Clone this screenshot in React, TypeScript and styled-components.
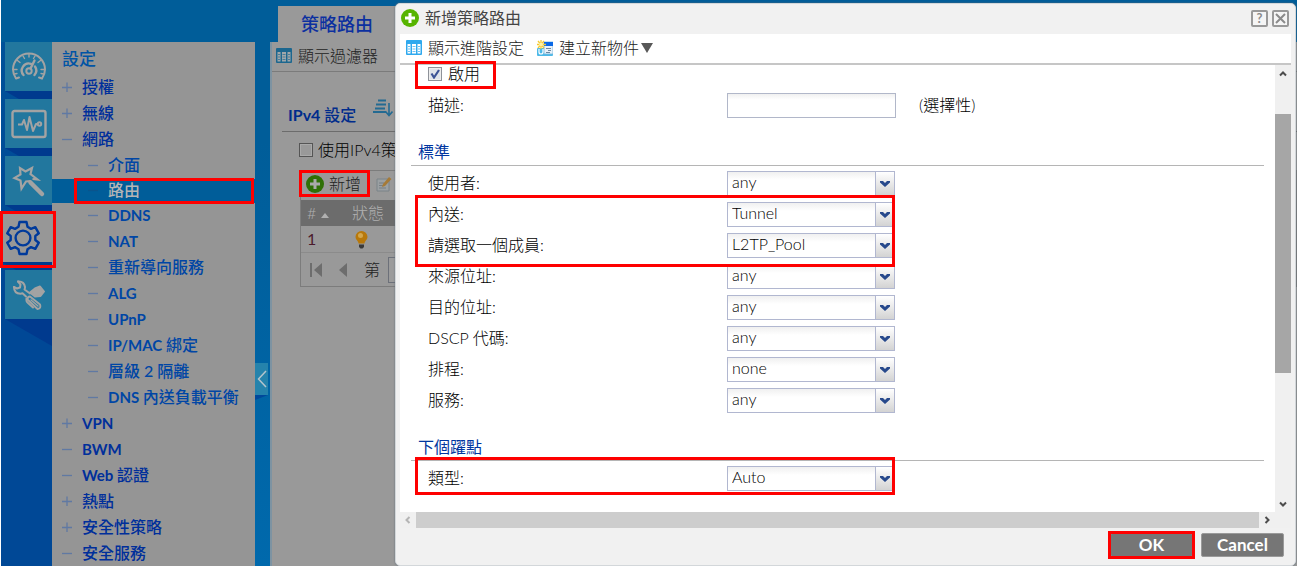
import React from "react";
import styled, { createGlobalStyle, css } from "styled-components";

const GlobalStyle = createGlobalStyle`
  * { box-sizing: border-box; }
  body {
    margin: 0;
    background: #fff;
    font-family: Lato, "Noto Sans CJK TC", sans-serif;
    font-size: 16px;
    font-weight: 300;
    line-height: 20px;
    color: #222;
  }
  button, input, select { font: inherit; color: inherit; margin: 0; padding: 0; }
  ul { list-style: none; margin: 0; padding: 0; }
  h1, h2 { margin: 0; font-size: inherit; }
`;

/* ---------- page shell ---------- */

const Page = styled.div`
  position: relative;
  display: flex;
  min-height: 100vh;
  margin-left: 1px;
  background: linear-gradient(#005d99 0%, #005d99 25%, #0069ac 100%);
`;

const Mark = styled.span<{ $inset: string }>`
  position: absolute;
  inset: ${(p) => p.$inset};
  border: 3px solid #fe0000;
  pointer-events: none;
  z-index: 3;
`;

const Rail = styled.nav`
  display: flex;
  flex-direction: column;
  gap: 8px;
  width: 51px;
  margin-top: 42px;
  padding-left: 4px;
  background: linear-gradient(#005199, #004896 45%);
`;

const RailButton = styled.button<{ $active?: boolean }>`
  position: relative;
  display: flex;
  align-items: center;
  justify-content: center;
  height: 49px;
  border: 0;
  background: ${(p) => (p.$active ? "#979797" : "#22779e")};
  color: ${(p) => (p.$active ? "#003a9b" : "#a3a3a3")};
  ${(p) => p.$active && css`margin-left: -4px; padding-right: 8px;`}
  &::after {
    content: "";
    position: absolute;
    top: 100%;
    left: 0;
    right: 0;
    height: 27px;
    background: #003a8e;
    clip-path: polygon(0 0, 100% 0, 100% 100%);
  }
  svg { display: block; }
`;

const Menu = styled.nav`
  width: 203px;
  margin-top: 42px;
  background: #959595;
`;

const MenuTitle = styled.h1`
  height: 33px;
  padding-left: 10px;
  font-size: 17px;
  line-height: 33px;
  font-weight: 500;
  color: #0054a5;
`;

const MenuItem = styled.li<{ $level: number; $selected?: boolean }>`
  position: relative;
  display: flex;
  align-items: center;
  gap: 10px;
  height: ${(p) => (p.$selected ? 24 : 26)}px;
  padding-bottom: 2px;
  padding-left: ${(p) => (p.$level === 1 ? 10 : 36)}px;
  background: ${(p) => (p.$selected ? "#005d99" : "transparent")};
  svg { flex: none; color: ${(p) => (p.$selected ? "#0a548c" : "#6079a3")}; }
  a { color: ${(p) => (p.$selected ? "#b5b5b5" : p.$level === 1 ? "#002f9b" : "#0046a5")}; }
`;

const MenuText = styled.a`
  font-size: 15px;
  font-weight: 700;
  text-decoration: none;
  white-space: nowrap;
`;

const Cjk = styled.span`
  font-size: 16px;
  font-weight: 500;
`;

const Gutter = styled.div`
  display: flex;
  align-items: flex-start;
  width: 15px;
  padding-top: 363px;
`;

const Collapse = styled.button`
  position: relative;
  display: flex;
  align-items: center;
  justify-content: center;
  width: 13px;
  height: 32px;
  border: 0;
  background: #2583ac;
  color: #b4c4cc;
  &::after {
    content: "";
    position: absolute;
    top: 100%;
    left: 0;
    right: 0;
    height: 5px;
    background: #00489b;
    clip-path: polygon(0 0, 100% 0, 0 100%);
  }
`;

/* ---------- page behind the dialog ---------- */

const Content = styled.main`
  flex: 1;
  min-width: 0;
  display: flex;
  flex-direction: column;
  padding-top: 6px;
`;

const Tab = styled.div`
  align-self: flex-start;
  width: 150px;
  height: 36px;
  margin-left: 8px;
  padding-left: 23px;
  font-size: 18px;
  font-weight: 500;
  line-height: 36px;
  background: #999;
  color: #0c30a0;
`;

const Panel = styled.section`
  flex: 1;
  background: #999;
  border-left: 2px solid #7d93a2;
`;

const PanelBar = styled.div`
  display: flex;
  align-items: center;
  gap: 6px;
  height: 30px;
  padding: 0 0 2px 4px;
  border-bottom: 1px solid #7b7b7b;
`;

const PanelHead = styled.div`
  display: flex;
  align-items: flex-end;
  gap: 17px;
  height: 60px;
  margin-left: 10px;
  padding: 0 0 6px 6px;
  border-bottom: 1px solid #6c6c6c;
  h2 { font-weight: 700; color: #002c8c; white-space: nowrap; }
  svg { margin-bottom: 8px; }
`;

const PanelCheck = styled.label`
  display: flex;
  align-items: center;
  gap: 5px;
  height: 38px;
  padding: 0 0 2px 27px;
  color: #000;
`;

const CheckBox = styled.input`
  appearance: none;
  width: 14px;
  height: 14px;
  border: 1px solid #8e9299;
  background: linear-gradient(135deg, #d0d4da, #fdfdfd);
  box-shadow: inset 0 0 0 1px #eee;
  &:checked {
    background: url("data:image/svg+xml,%3Csvg xmlns='http://www.w3.org/2000/svg' viewBox='0 0 12 12'%3E%3Cpath d='M2.5 5.5L5 9.5L10 2' fill='none' stroke='%233c5396' stroke-width='2.2'/%3E%3C/svg%3E") center / 12px 12px no-repeat, #dfe3ea;
  }
`;

const DimCheckBox = styled(CheckBox)`
  border-color: #555;
  background: #999;
  box-shadow: inset 0 0 0 1px #a9a9a9;
`;

const Grid = styled.div`
  margin-left: 28px;
  border: 1px solid #7c7c7c;
`;

const GridTools = styled.div`
  display: flex;
  align-items: center;
  gap: 15px;
  height: 29px;
  padding: 0 0 3px 5px;
`;

const GridTool = styled.button`
  position: relative;
  display: flex;
  align-items: center;
  gap: 5px;
  border: 0;
  background: none;
`;

const Table = styled.table`
  width: 100%;
  border-collapse: collapse;
  text-align: left;
  th, td { padding: 0 0 0 6px; }
  th { height: 26px; background: #6c6c6c; color: #b0b0b0; font-weight: 300; }
  td { height: 26px; color: #4b1a2c; font-weight: 400; }
  th:first-child { width: 45px; }
  td:last-child { padding-left: 9px; }
  svg { vertical-align: middle; }
`;

const Pager = styled.div`
  display: flex;
  align-items: center;
  gap: 17px;
  height: 34px;
  padding-left: 9px;
  border-top: 1px solid #8b8b8b;
  input { width: 36px; height: 26px; margin-left: -9px; border: 1px solid #6c7079; background: #9b9b9b; }
`;

/* ---------- dialog ---------- */

const Dialog = styled.div`
  position: absolute;
  top: 3px;
  right: 1px;
  bottom: 1px;
  left: 394px;
  z-index: 2;
  display: flex;
  flex-direction: column;
  padding: 0 4px;
  border: 1px solid #d3d7da;
  border-radius: 5px;
  background: #f1f1f1;
  box-shadow: 0 0 2px #5d6a75;
`;

const DialogHead = styled.header`
  display: flex;
  align-items: center;
  gap: 4px;
  height: 30px;
  padding: 0 2px 2px 1px;
  h2 { flex: 1; padding-left: 2px; font-weight: 400; color: #444; }
`;

const HeadButton = styled.button`
  display: flex;
  align-items: center;
  justify-content: center;
  width: 17px;
  height: 17px;
  border: 2px solid #999;
  border-radius: 2px;
  background: #f5f5f5;
  color: #8b8b8b;
  font-size: 13px;
  font-weight: 700;
  line-height: 12px;
`;

const Toolbar = styled.div`
  display: flex;
  align-items: center;
  gap: 13px;
  height: 31px;
  padding: 0 6px 2px;
  background: #fff;
  border-bottom: 2px solid #c6c6c6;
`;

const ToolButton = styled.button`
  display: flex;
  align-items: center;
  gap: 6px;
  border: 0;
  background: none;
  svg { display: block; }
`;

const MenuLabel = styled.span`
  display: flex;
  align-items: center;
  gap: 2px;
`;

const Scroller = styled.div`
  flex: 1;
  min-height: 0;
  display: grid;
  grid-template-columns: 1fr 16px;
  grid-template-rows: 1fr 16px;
`;

const Form = styled.form`
  min-height: 0;
  padding: 0 11px;
  background: #fff;
  color: #000;
`;

const EnableRow = styled.label`
  position: relative;
  display: flex;
  align-items: center;
  gap: 6px;
  width: 80px;
  height: 20px;
  margin: 0 0 5px 4px;
  padding: 0 0 2px 13px;
`;

const SectionTitle = styled.h2`
  height: 45px;
  margin-bottom: 2px;
  padding: 19px 0 0 7px;
  border-bottom: 1px solid #b5b5b5;
  font-weight: 400;
  line-height: 24px;
  color: #0036a0;
`;

const Group = styled.div`
  position: relative;
  width: 484px;
`;

const Row = styled.div`
  display: flex;
  align-items: center;
  height: 31px;
  padding-left: 17px;
  label { width: 299px; padding-bottom: 2px; }
`;

const TextInput = styled.input`
  width: 169px;
  height: 25px;
  border: 1px solid #b1b7c9;
  background: linear-gradient(#f0f0f0, #fff 6px);
`;

const Hint = styled.span`
  margin-left: 23px;
  padding-bottom: 2px;
`;

const SelectBox = styled.span`
  position: relative;
  display: block;
  width: 168px;
  height: 25px;
  select {
    appearance: none;
    width: 100%;
    height: 100%;
    padding: 0 22px 3px 4px;
    border: 1px solid #b1b7d0;
    border-radius: 0;
    background: linear-gradient(#f0f0f0, #fff 8px);
    line-height: 20px;
  }
`;

const SelectArrow = styled.span`
  position: absolute;
  top: 0;
  right: 0;
  bottom: 0;
  display: flex;
  align-items: center;
  justify-content: center;
  width: 20px;
  border: 1px solid #b1b7d0;
  background: linear-gradient(#fff, #d3d3d3);
  pointer-events: none;
`;

const VBar = styled.div`
  display: flex;
  flex-direction: column;
  align-items: center;
  justify-content: space-between;
  padding: 5px 0 4px;
  background: #f0f0f0;
`;

const VTrack = styled.div`
  flex: 1;
  width: 100%;
  padding: 36px 0 127px;
  div { height: 100%; background: #a6a6a6; }
`;

const HBar = styled.div`
  display: flex;
  align-items: center;
  gap: 4px;
  padding: 0 4px;
  background: #f0f0f0;
  div { flex: 1; height: 16px; background: #cdcdcd; }
`;

const Corner = styled.div`
  background: #f0f0f0;
`;

const DialogFoot = styled.footer`
  display: flex;
  justify-content: flex-end;
  gap: 8px;
  height: 37px;
  padding: 5px 7px 0 0;
`;

const FootButton = styled.button`
  position: relative;
  width: 83px;
  height: 24px;
  border: 1px solid #9a9a9a;
  border-radius: 2px;
  background: #767676;
  color: #fff;
  font-size: 17px;
  font-weight: 700;
  line-height: 20px;
`;

/* ---------- drawings ---------- */

const stroke = { fill: "none", stroke: "currentColor" } as const;

const GaugeIcon = () => (
  <svg width="36" height="30" viewBox="0 0 36 30" {...stroke} strokeWidth="2" strokeLinecap="round">
    <path d="M5 26.500Q2 22 2 17.500A16 16 0 0 1 34 17.500Q34 22 31 26.500L28 25.500M5 26.500L8 25.500" />
    <path d="M2.500 17.500H6M33.500 17.500H30M6.500 8.500L9 10.500M29.500 8.500L27 10.500M12 4L13.500 6.500M18 2V5M24 4L22.500 6.500M3.500 22L6 21.500M32.500 22L30 21.500" strokeWidth="1.400" />
    <path d="M12.500 23A7 7 0 0 1 20 11.800M24 14.500A7 7 0 0 1 23.500 23" strokeWidth="2.400" />
    <circle cx="18" cy="19" r="2.700" />
    <path d="M19.500 16.500L23.500 8.500" strokeWidth="2.400" />
  </svg>
);

const MonitorIcon = () => (
  <svg width="36" height="30" viewBox="0 0 36 30" {...stroke} strokeWidth="2" strokeLinejoin="round">
    <rect x="1.500" y="2" width="33" height="26" rx="2" strokeWidth="2.400" />
    <path d="M7 15.500H11L13 11L16 21L18.500 8L22 22L25 15H27" />
    <circle cx="28.500" cy="15" r="1.700" />
  </svg>
);

const WandIcon = () => (
  <svg width="34" height="34" viewBox="0 0 34 34" {...stroke} strokeWidth="2.200" strokeLinejoin="miter">
    <path d="M18.500 17L14 17.500L9.500 24.500L8.500 16.500L2.500 14L8.500 10.500L8 4L13.500 7.500L20 4L18.500 10L25.500 15.500L20.500 15" />
    <path d="M18.500 18.500L30 30" strokeWidth="4.500" strokeLinecap="round" />
  </svg>
);

const GearIcon = () => (
  <svg width="36" height="36" viewBox="0 0 36 36" {...stroke} strokeWidth="2.400" strokeLinejoin="round">
    <circle cx="18" cy="18" r="7.400" />
    <path d="M14.500 2H21.500L22.500 6.800L26 8.900L30.300 7.200L33.800 13.300L30.300 16V20L33.800 22.700L30.300 28.800L26 27.100L22.500 29.200L21.500 34H14.500L13.500 29.200L10 27.100L5.700 28.800L2.200 22.700L5.700 20V16L2.200 13.300L5.700 7.200L10 8.900L13.500 6.800Z" />
  </svg>
);

const ToolsIcon = () => (
  <svg width="34" height="32" viewBox="0 0 34 32" {...stroke} strokeWidth="2" strokeLinejoin="round" strokeLinecap="round">
    <path d="M6 2.500Q12 2 13 8Q13 9.500 12.500 10.500L18 14.500M2 8Q2 14.500 8.500 14.800L10.500 14.300L14 17.500" />
    <path d="M6 2.500L8.500 5.500L8 8.500L5 9.500L2 8" />
    <path d="M18 13.500L23 9.500L28 7.500L32 12.500L28.500 17L23 17.500Z" fill="currentColor" />
    <path d="M14.500 19.500Q14 22.500 16 24L21 28.500" />
    <path d="M18 17.500L28 25.500Q29.500 29.500 25.500 30L15.500 20.500Q15.500 17.500 18 17.500Z" />
    <path d="M19 21L26 27" strokeWidth="1.400" />
  </svg>
);

const Toggle = ({ open }: { open: boolean }) => (
  <svg width="10" height="10" viewBox="0 0 10 10" {...stroke} strokeWidth="1.300">
    <path d={open ? "M0 5.500H10" : "M0 5.500H10M5 0.500V10"} />
  </svg>
);

const AddIcon = () => (
  <svg width="18" height="18" viewBox="0 0 18 18">
    <circle cx="9" cy="9" r="9" fill="#57b400" />
    <path d="M9 4V14M4 9H14" stroke="#fff" strokeWidth="3" />
  </svg>
);

const DimAddIcon = () => (
  <svg width="18" height="18" viewBox="0 0 18 18">
    <circle cx="9" cy="9" r="9" fill="#2f7006" />
    <path d="M9 4V14M4 9H14" stroke="#aaa" strokeWidth="3" />
  </svg>
);

const ColumnsIcon = ({ dim }: { dim?: boolean }) => (
  <svg width="16" height="15" viewBox="0 0 16 15">
    <rect width="16" height="15" rx="1" fill={dim ? "#1c678f" : "#2fa9ee"} />
    <path d="M1.500 4H4.500V13.500H1.500ZM6 4H10V13.500H6ZM11.500 4H14.500V13.500H11.500Z" fill={dim ? "#a0a7aa" : "#fff"} />
    <path d="M2 6.500H4M6.500 6.500H9.500M12 6.500H14M2 9H4M6.500 9H9.500M12 9H14M2 11.500H4M6.500 11.500H9.500M12 11.500H14" stroke={dim ? "#487d97" : "#6cc1f1"} />
  </svg>
);

const NewObjectIcon = () => (
  <svg width="16" height="16" viewBox="0 0 16 16">
    <rect x="0" y="8" width="16" height="8" rx="1" fill="#4cb9e8" />
    <rect x="7" y="2" width="9" height="12" fill="#e9f1f8" stroke="#76b7dc" strokeWidth=".8" />
    <rect x="7" y="2" width="9" height="4" fill="#0a68e6" />
    <path d="M9 8.500H14M11 10.500H14M9 12.500H13" stroke="#4d6e8b" strokeWidth=".8" />
    <path d="M2 9V12Q2 14 4 14Q6 14 6 12V9" fill="none" stroke="#fff" strokeWidth="1.200" />
    <path d="M4 0V9M0 4.500H9M1 1L7 8M7 1L1 8" stroke="#f5c931" strokeWidth="1.300" />
    <circle cx="4" cy="4.500" r="2" fill="#fff1a2" />
  </svg>
);

const SortIcon = () => (
  <svg width="20" height="18" viewBox="0 0 20 18" fill="none" stroke="#236a92" strokeWidth="2">
    <path d="M5 1.500H13M3 5.500H13M2 9.500H12M0 13H13" />
    <path d="M16 4V16M12.500 12.500L16 16.500L19.500 12.500" strokeWidth="1.600" />
  </svg>
);

const EditIcon = () => (
  <svg width="16" height="16" viewBox="0 0 16 16">
    <path d="M1 3H13V15H1Z" fill="#9ba0a3" stroke="#7b8388" />
    <path d="M3 7H8M3 9.500H7M3 12H10" stroke="#777f84" />
    <path d="M6 11L7 8L13 1L15.500 3L9 10Z" fill="#a57a38" />
  </svg>
);

const BulbIcon = () => (
  <svg width="13" height="18" viewBox="0 0 13 18">
    <path d="M6.500 0A6 6 0 0 1 12.500 6Q12.500 8 10.500 10Q9.500 11 9.500 12.500H3.500Q3.500 11 2.500 10Q.5 8 .5 6A6 6 0 0 1 6.500 0Z" fill="#b8780a" />
    <circle cx="5.500" cy="4.500" r="2.500" fill="#d3a64b" />
    <path d="M4 13.500H9V16L7.500 17.500H5.500L4 16Z" fill="#3a3a3a" />
  </svg>
);

const Chevron = ({ rotate = 0, color = "#4d4d4d" }: { rotate?: number; color?: string }) => (
  <svg width="8" height="8" viewBox="0 0 8 8" fill="none" stroke={color} strokeWidth="2">
    <path d="M1 2.500L4 5.500L7 2.500" transform={`rotate(${rotate} 4 4)`} />
  </svg>
);

/* ---------- data ---------- */

type Entry = { level: 1 | 2; open?: boolean; latin?: string; cjk?: string; selected?: boolean };

const entries: Entry[] = [
  { level: 1, cjk: "授權" },
  { level: 1, cjk: "無線" },
  { level: 1, cjk: "網路", open: true },
  { level: 2, cjk: "介面", open: true },
  { level: 2, cjk: "路由", open: true, selected: true },
  { level: 2, latin: "DDNS", open: true },
  { level: 2, latin: "NAT", open: true },
  { level: 2, cjk: "重新導向服務", open: true },
  { level: 2, latin: "ALG", open: true },
  { level: 2, latin: "UPnP", open: true },
  { level: 2, latin: "IP/MAC ", cjk: "綁定", open: true },
  { level: 2, cjk: "層級 2 隔離", open: true },
  { level: 2, latin: "DNS ", cjk: "內送負載平衡", open: true },
  { level: 1, latin: "VPN" },
  { level: 1, latin: "BWM", open: true },
  { level: 1, latin: "Web ", cjk: "認證", open: true },
  { level: 1, cjk: "熱點" },
  { level: 1, cjk: "安全性策略" },
  { level: 1, cjk: "安全服務", open: true },
];

const Field = ({ id, label, value }: { id: string; label: string; value: string }) => (
  <Row>
    <label htmlFor={id}>{label}</label>
    <SelectBox>
      <select id={id} defaultValue={value}>
        <option>{value}</option>
      </select>
      <SelectArrow>
        <svg width="10" height="6" viewBox="0 0 10 6">
          <path d="M0 0H3L5 2L7 0H10V1.500L5 6L0 1.500Z" fill="#27498c" />
        </svg>
      </SelectArrow>
    </SelectBox>
  </Row>
);

export default function App() {
  return (
    <>
      <GlobalStyle />
      <Page>
        <Rail aria-label="主選單">
          <RailButton aria-label="儀表板"><GaugeIcon /></RailButton>
          <RailButton aria-label="監控"><MonitorIcon /></RailButton>
          <RailButton aria-label="精靈"><WandIcon /></RailButton>
          <RailButton aria-label="設定" $active>
            <GearIcon />
            <Mark $inset="-2px -4px -6px -1px" />
          </RailButton>
          <RailButton aria-label="維護"><ToolsIcon /></RailButton>
        </Rail>

        <Menu aria-label="設定">
          <MenuTitle>設定</MenuTitle>
          <ul>
            {entries.map((e) => (
              <MenuItem key={(e.latin ?? "") + (e.cjk ?? "")} $level={e.level} $selected={e.selected}>
                <Toggle open={!!e.open} />
                <MenuText href="#">
                  {e.latin}
                  {e.cjk && <Cjk>{e.cjk}</Cjk>}
                </MenuText>
                {e.selected && <Mark $inset="-1px 1px -1px 22px" />}
              </MenuItem>
            ))}
          </ul>
        </Menu>

        <Gutter>
          <Collapse aria-label="收合選單">
            <svg width="10" height="18" viewBox="0 0 10 18" {...stroke} strokeWidth="1.500">
              <path d="M9 1L1.500 9L9 17" />
            </svg>
          </Collapse>
        </Gutter>

        <Content>
          <Tab>策略路由</Tab>
          <Panel>
            <PanelBar><ColumnsIcon dim />顯示過濾器</PanelBar>
            <PanelHead>
              <h2>IPv4 <Cjk>設定</Cjk></h2>
              <SortIcon />
            </PanelHead>
            <PanelCheck><DimCheckBox type="checkbox" />使用IPv4策</PanelCheck>
            <Grid>
              <GridTools>
                <GridTool>
                  <DimAddIcon />新增
                  <Mark $inset="-4px -9px -3px -7px" />
                </GridTool>
                <GridTool aria-label="編輯"><EditIcon /></GridTool>
              </GridTools>
              <Table>
                <thead>
                  <tr>
                    <th>
                      #{" "}
                      <svg width="8" height="5" viewBox="0 0 8 5"><path d="M4 0L8 5H0Z" fill="#b0b0b0" /></svg>
                    </th>
                    <th>狀態</th>
                  </tr>
                </thead>
                <tbody>
                  <tr>
                    <td>1</td>
                    <td><BulbIcon /></td>
                  </tr>
                </tbody>
              </Table>
              <Pager>
                <svg width="12" height="14" viewBox="0 0 12 14" fill="#6d6d6d"><path d="M0 0H2V14H0ZM12 0V14L4 7Z" /></svg>
                <svg width="8" height="14" viewBox="0 0 8 14" fill="#6d6d6d"><path d="M8 0V14L0 7Z" /></svg>
                第
                <input aria-label="頁" />
              </Pager>
            </Grid>
          </Panel>
        </Content>

        <Dialog role="dialog" aria-label="新增策略路由">
          <DialogHead>
            <AddIcon />
            <h2>新增策略路由</h2>
            <HeadButton aria-label="說明">?</HeadButton>
            <HeadButton aria-label="關閉">
              <svg width="11" height="11" viewBox="0 0 11 11" {...stroke} strokeWidth="2"><path d="M1 1L10 10M10 1L1 10" /></svg>
            </HeadButton>
          </DialogHead>
          <Toolbar>
            <ToolButton><ColumnsIcon />顯示進階設定</ToolButton>
            <ToolButton>
              <NewObjectIcon />
              <MenuLabel>
                建立新物件
                <svg width="12" height="10" viewBox="0 0 12 10"><path d="M0 0H12L6 10Z" fill="#585858" /></svg>
              </MenuLabel>
            </ToolButton>
          </Toolbar>
          <Scroller>
            <Form onSubmit={(e) => e.preventDefault()}>
              <EnableRow>
                <CheckBox type="checkbox" defaultChecked />
                啟用
                <Mark $inset="-4px -1px -4px 0" />
              </EnableRow>
              <Row>
                <label htmlFor="desc">描述:</label>
                <TextInput id="desc" />
                <Hint>(選擇性)</Hint>
              </Row>
              <SectionTitle>標準</SectionTitle>
              <Field id="user" label="使用者:" value="any" />
              <Group>
                <Field id="incoming" label="內送:" value="Tunnel" />
                <Field id="member" label="請選取一個成員:" value="L2TP_Pool" />
                <Mark $inset="-4px 0 -6px 4px" />
              </Group>
              <Field id="source" label="來源位址:" value="any" />
              <Field id="destination" label="目的位址:" value="any" />
              <Field id="dscp" label="DSCP 代碼:" value="any" />
              <Field id="schedule" label="排程:" value="none" />
              <Field id="service" label="服務:" value="any" />
              <SectionTitle>下個躍點</SectionTitle>
              <Group>
                <Field id="type" label="類型:" value="Auto" />
                <Mark $inset="-6px 0 -1px 4px" />
              </Group>
            </Form>
            <VBar>
              <Chevron rotate={180} />
              <VTrack><div /></VTrack>
              <Chevron />
            </VBar>
            <HBar>
              <Chevron rotate={90} color="#b5b5b5" />
              <div />
              <Chevron rotate={-90} />
            </HBar>
            <Corner />
          </Scroller>
          <DialogFoot>
            <FootButton>
              OK
              <Mark $inset="-3px" />
            </FootButton>
            <FootButton>Cancel</FootButton>
          </DialogFoot>
        </Dialog>
      </Page>
    </>
  );
}
